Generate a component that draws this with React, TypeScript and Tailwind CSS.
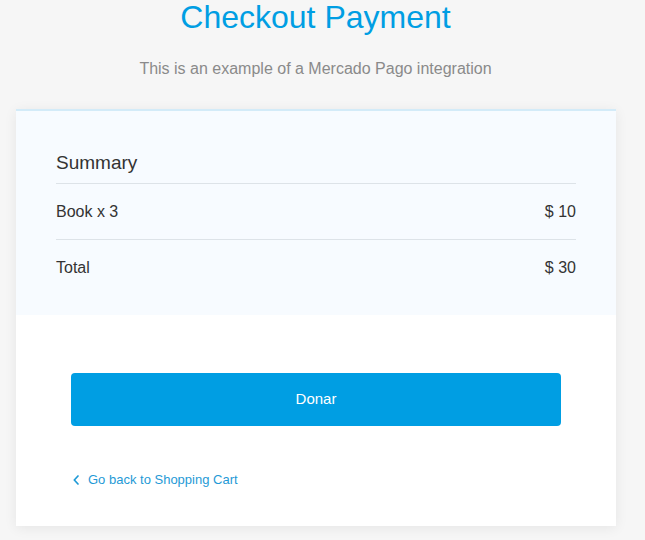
const App = () => {
  return (
    <div className="min-h-screen bg-[#f6f6f6] font-['Liberation_Sans',Arial,sans-serif]">
      <div className="w-[631px]">
        {/* header */}
        <div className="text-center pt-[1px]">
          <h1 className="text-[32px] leading-none text-[#009ee3]">Checkout Payment</h1>
          <p className="mt-[24px] text-[16px] leading-6 text-[#8a8a8a]">
            This is an example of a Mercado Pago integration
          </p>
        </div>

        {/* card */}
        <div className="mx-4 mt-[28px] w-[600px] bg-white border-t-2 border-[#d3ebf8] shadow-[0_2px_12px_rgba(0,0,0,0.07)]">
          {/* summary */}
          <div className="bg-[#f7fbff] px-10 pt-10 pb-[20px]">
            <h2 className="text-[19px] leading-6 text-[#333] pb-2 border-b border-[#dde3e8]">Summary</h2>
            <div className="flex justify-between pt-4 pb-[15px] text-[16px] leading-6 text-[#333] border-b border-[#dde3e8]">
              <span>Book x 3</span>
              <span>$ 10</span>
            </div>
            <div className="flex justify-between pt-4 pb-[15px] text-[16px] leading-6 text-[#333]">
              <span>Total</span>
              <span>$ 30</span>
            </div>
          </div>

          {/* payment */}
          <div className="pl-[55px] pr-[55px] pt-[58px] pb-[36px]">
            <button className="w-full h-[53px] rounded-[4px] bg-[#009ee3] text-white text-[15px]">
              Donar
            </button>
            <a className="mt-[44px] flex items-center gap-[9px] text-[13px] leading-5 text-[#1f9ad6] cursor-pointer">
              <svg width="6" height="10" viewBox="0 0 6 10" className="ml-[2px]" fill="none">
                <path d="M5 1 1.3 5 5 9" stroke="currentColor" strokeWidth="1.7" strokeLinecap="round" strokeLinejoin="round" />
              </svg>
              Go back to Shopping Cart
            </a>
          </div>
        </div>
      </div>
    </div>
  );
};

export default App;
